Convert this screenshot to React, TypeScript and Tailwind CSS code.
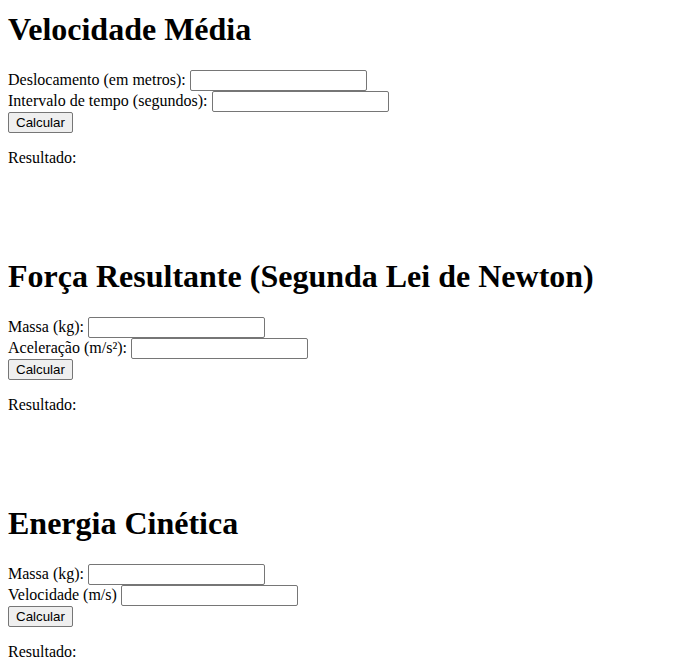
import React from "react";

const sections = [
  { title: "Velocidade Média", a: "Deslocamento (em metros):", b: "Intervalo de tempo (segundos):" },
  { title: "Força Resultante (Segunda Lei de Newton)", a: "Massa (kg):", b: "Aceleração (m/s²):" },
  { title: "Energia Cinética", a: "Massa (kg):", b: "Velocidade (m/s)" },
];

function Row({ label }: { label: string }) {
  return (
    <div className="flex items-start h-[21px]">
      <span className="leading-[18px] pt-[1px] mr-[4px] whitespace-nowrap">{label}</span>
      <input
        type="text"
        className="w-[177px] h-[21px] box-border border border-[#767676] rounded-[2px] bg-white px-[2px] text-[13.33px] font-['Liberation_Sans',Arial,sans-serif] outline-none"
      />
    </div>
  );
}

export default function App() {
  return (
    <div className="min-h-screen bg-white text-black font-['Liberation_Serif','Times_New_Roman',serif] text-[16px] px-2 pt-[11px] flex flex-col gap-[91px]">
      {sections.map((s) => (
        <div key={s.title} className="flex flex-col">
          <h1 className="text-[32px] font-bold leading-[37px] mb-[22px] whitespace-nowrap">{s.title}</h1>
          <Row label={s.a} />
          <Row label={s.b} />
          <div className="flex h-[21px]">
            <button className="h-[21px] px-[7px] box-border border border-[#767676] rounded-[2px] bg-[#efefef] text-[13.33px] leading-none text-black font-['Liberation_Sans',Arial,sans-serif]">
              Calcular
            </button>
          </div>
          <p className="mt-4 leading-[18px]">Resultado:</p>
        </div>
      ))}
    </div>
  );
}
